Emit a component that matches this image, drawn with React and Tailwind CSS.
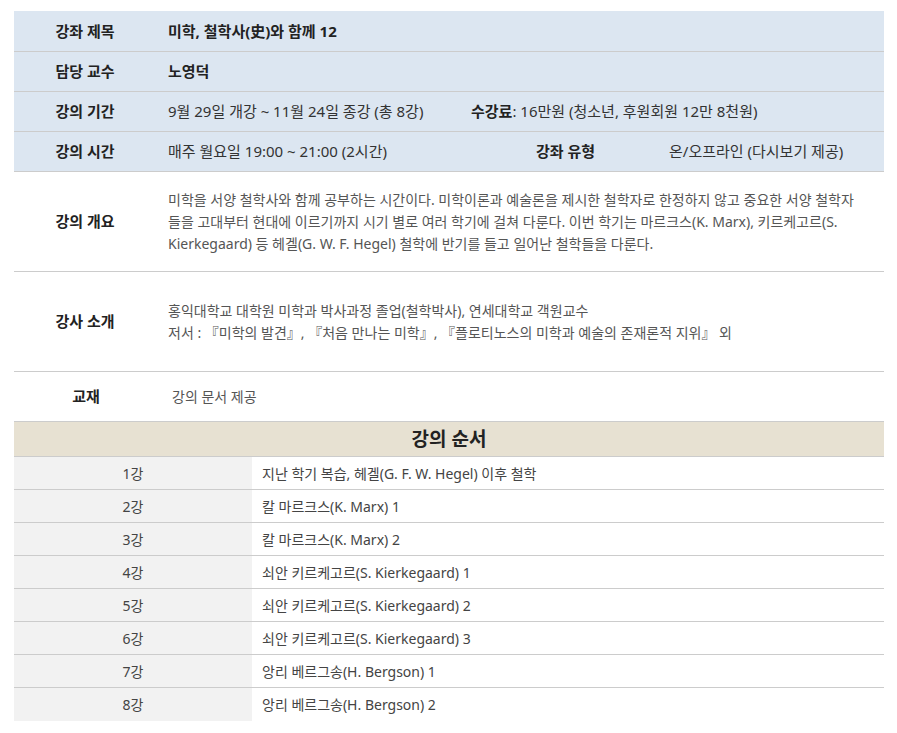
const lessons = [
  { no: "1강", title: "지난 학기 복습, 헤겔(G. F. W. Hegel) 이후 철학" },
  { no: "2강", title: "칼 마르크스(K. Marx) 1" },
  { no: "3강", title: "칼 마르크스(K. Marx) 2" },
  { no: "4강", title: "쇠안 키르케고르(S. Kierkegaard) 1" },
  { no: "5강", title: "쇠안 키르케고르(S. Kierkegaard) 2" },
  { no: "6강", title: "쇠안 키르케고르(S. Kierkegaard) 3" },
  { no: "7강", title: "앙리 베르그송(H. Bergson) 1" },
  { no: "8강", title: "앙리 베르그송(H. Bergson) 2" },
];

function Label({ children, className = "" }) {
  return (
    <div className={`flex items-center justify-center font-bold text-[15px] text-[#222] ${className}`}>
      {children}
    </div>
  );
}

export default function App() {
  return (
    <div
      className="bg-white pt-[11px] pl-[14px] w-[884px] text-[15px] text-[#333]"
      style={{ fontFamily: '"Noto Sans", "Noto Sans CJK KR", sans-serif' }}
    >
      {/* 기본 정보 */}
      <div className="bg-[#dce6f1]">
        <div className="grid grid-cols-[142px_1fr] h-[41px] border-b border-[#cccccc]">
          <Label>강좌 제목</Label>
          <div className="flex items-center pl-3 font-bold text-[#222]">미학, 철학사(史)와 함께 12</div>
        </div>
        <div className="grid grid-cols-[142px_1fr] h-10 border-b border-[#cccccc]">
          <Label>담당 교수</Label>
          <div className="flex items-center pl-3 font-bold text-[#222]">노영덕</div>
        </div>
        <div className="grid grid-cols-[142px_303px_1fr] h-10 border-b border-[#cccccc]">
          <Label>강의 기간</Label>
          <div className="flex items-center pl-3">9월 29일 개강 ~ 11월 24일 종강 (총 8강)</div>
          <div className="flex items-center pl-3 whitespace-nowrap">
            <span className="font-bold text-[#222]">수강료</span>: 16만원 (청소년, 후원회원 12만 8천원)
          </div>
        </div>
        <div className="grid grid-cols-[142px_320px_179px_1fr] h-10 border-b border-[#cccccc]">
          <Label>강의 시간</Label>
          <div className="flex items-center pl-3">매주 월요일 19:00 ~ 21:00 (2시간)</div>
          <Label>강좌 유형</Label>
          <div className="flex items-center pl-[14px] whitespace-nowrap">온/오프라인 (다시보기 제공)</div>
        </div>
      </div>

      {/* 상세 */}
      <div className="grid grid-cols-[142px_1fr] h-[100px] border-b border-[#cccccc]">
        <Label>강의 개요</Label>
        <div className="flex items-center pl-3 text-[14px] leading-[22px] text-[#555] whitespace-nowrap">
          <p>
            미학을 서양 철학사와 함께 공부하는 시간이다. 미학이론과 예술론을 제시한 철학자로 한정하지 않고 중요한 서양 철학자
            <br />
            들을 고대부터 현대에 이르기까지 시기 별로 여러 학기에 걸쳐 다룬다. 이번 학기는 마르크스(K. Marx), 키르케고르(S.
            <br />
            Kierkegaard) 등 헤겔(G. W. F. Hegel) 철학에 반기를 들고 일어난 철학들을 다룬다.
          </p>
        </div>
      </div>
      <div className="grid grid-cols-[142px_1fr] h-[100px] border-b border-[#cccccc]">
        <Label>강사 소개</Label>
        <div className="flex flex-col justify-center pl-3 text-[14px] leading-[22px] text-[#555]">
          <p>홍익대학교 대학원 미학과 박사과정 졸업(철학박사), 연세대학교 객원교수</p>
          <p>저서 : 『미학의 발견』, 『처음 만나는 미학』, 『플로티노스의 미학과 예술의 존재론적 지위』 외</p>
        </div>
      </div>
      <div className="grid grid-cols-[144px_1fr] h-[49px]">
        <Label>교재</Label>
        <div className="flex items-center pl-[14px] text-[14px] text-[#555]">강의 문서 제공</div>
      </div>

      {/* 강의 순서 */}
      <div className="h-9 flex items-center justify-center bg-[#e7e1d2] border-y border-[#cccccc] text-[19px] font-bold text-[#222]">
        강의 순서
      </div>
      {lessons.map((l, i) => (
        <div
          key={l.no}
          className={`grid grid-cols-[238px_1fr] h-[33px] ${i < lessons.length - 1 ? "border-b border-[#cccccc]" : ""}`}
        >
          <div className="flex items-center justify-center bg-[#f2f2f2] text-[14px] text-[#444]">{l.no}</div>
          <div className="flex items-center pl-[10px] text-[14px] text-[#444]">{l.title}</div>
        </div>
      ))}
    </div>
  );
}
